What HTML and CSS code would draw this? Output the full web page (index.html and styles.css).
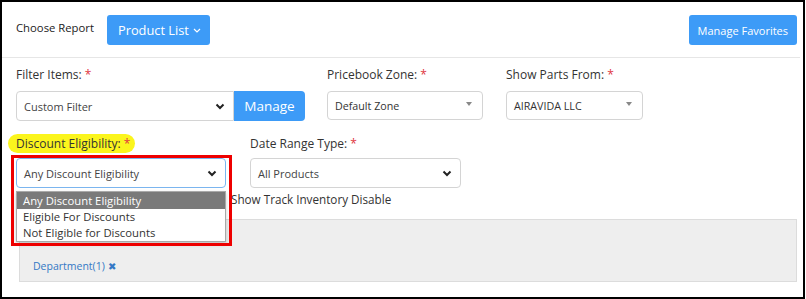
FILE: index.html
```html
<!DOCTYPE html>
<html lang="en">
<head>
    <meta charset="UTF-8">
    <meta name="viewport" content="width=device-width, initial-scale=1.0">
    <title>Product List Report</title>
    <link rel="stylesheet" href="styles.css">
</head>
<body>
    <div class="frame">
        <!-- Report chooser -->
        <div class="top-bar">
            <span class="choose-label">Choose Report</span>
            <button class="btn btn-report">Product List
                <svg class="caret" width="8" height="5" viewBox="0 0 8 5"><path d="M1 1l3 3 3-3" fill="none" stroke="#fff" stroke-width="1.2"/></svg>
            </button>
            <button class="btn btn-fav">Manage Favorites</button>
        </div>

        <!-- Filters -->
        <div class="filters">
            <div class="row">
                <div class="field col-filter">
                    <label class="field-label">Filter Items: <span class="req">*</span></label>
                    <div class="input-group">
                        <div class="select">
                            <span>Custom Filter</span>
                            <svg class="chev" width="10" height="7" viewBox="0 0 10 7"><path d="M1.5 1.5l3.5 3.5 3.5-3.5" fill="none" stroke="#222" stroke-width="2"/></svg>
                        </div>
                        <button class="btn btn-manage">Manage</button>
                    </div>
                </div>
                <div class="field col-zone">
                    <label class="field-label">Pricebook Zone: <span class="req">*</span></label>
                    <div class="select select-sm">
                        <span>Default Zone</span>
                        <span class="tri"></span>
                    </div>
                </div>
                <div class="field col-parts">
                    <label class="field-label">Show Parts From: <span class="req">*</span></label>
                    <div class="select select-sm">
                        <span>AIRAVIDA LLC</span>
                        <span class="tri"></span>
                    </div>
                </div>
            </div>

            <div class="row row-2">
                <div class="field col-discount">
                    <label class="field-label marked">Discount Eligibility: <span class="req">*</span></label>
                    <div class="select focused">
                        <span>Any Discount Eligibility</span>
                        <svg class="chev" width="10" height="7" viewBox="0 0 10 7"><path d="M1.5 1.5l3.5 3.5 3.5-3.5" fill="none" stroke="#222" stroke-width="2"/></svg>
                    </div>
                    <ul class="dropdown">
                        <li class="active">Any Discount Eligibility</li>
                        <li>Eligible For Discounts</li>
                        <li>Not Eligible for Discounts</li>
                    </ul>
                    <div class="annotation"></div>
                </div>
                <div class="field col-date">
                    <label class="field-label">Date Range Type: <span class="req">*</span></label>
                    <div class="select">
                        <span>All Products</span>
                        <svg class="chev" width="10" height="7" viewBox="0 0 10 7"><path d="M1.5 1.5l3.5 3.5 3.5-3.5" fill="none" stroke="#222" stroke-width="2"/></svg>
                    </div>
                </div>
            </div>

            <div class="check-row">
                <span class="check"><span class="box"></span></span>
                <label class="check"><span class="box"></span>Show Track Inventory Disable</label>
            </div>

            <div class="tags-panel">
                <a class="tag" href="#">Department(1) <span class="x">&#10006;</span></a>
            </div>
        </div>
    </div>
</body>
</html>
```

FILE: styles.css
```css
/* General */
body {
    margin: 0;
    font-family: "Open Sans", Arial, sans-serif;
    color: #333;
    background: #fff;
}

.frame {
    width: 805px;
    height: 299px;
    box-sizing: border-box;
    border: 2px solid #000;
    overflow: hidden;
}

/* Top bar */
.top-bar {
    display: flex;
    align-items: center;
    padding: 13px 3px 12px 14px;
    margin: 0 3px 0 0;
    border-bottom: 1px solid #e6e6e6;
}
.choose-label {
    font-size: 11.3px;
    color: #222;
    margin-right: 13px;
    margin-top: -6px;
}

.btn {
    font-family: inherit;
    background-color: #3d9bf7;
    color: #fff;
    border: none;
    border-radius: 3px;
    cursor: pointer;
}
.btn-report {
    height: 30px;
    padding: 0 9px 0 11px;
    font-size: 12.8px;
    display: flex;
    align-items: center;
    gap: 4px;
}
.btn-fav {
    height: 30px;
    margin-left: auto;
    padding: 0 9px;
    font-size: 11px;
}

/* Filters */
.filters {
    padding: 8px 0 0 14px;
    position: relative;
}
.row {
    display: flex;
}
.row-2 {
    margin-top: 12px;
}
.field {
    display: flex;
    flex-direction: column;
    position: relative;
}
.field-label {
    font-size: 12px;
    line-height: 18px;
    height: 18px;
    margin-bottom: 7px;
}
.row-2 .field-label {
    margin-top: 2px;
    margin-bottom: 5px;
}
.req {
    color: #e0353f;
}
.field-label.marked {
    align-self: flex-start;
    background: #fbf51d;
    border-radius: 10px;
    padding: 0 5px 0 8px;
    margin-left: -8px;
    margin-top: 1px;
    height: 19px;
    line-height: 20px;
}

.col-filter { width: 289px; margin-right: 22px; }
.col-zone { width: 156px; margin-right: 23px; }
.col-parts { width: 137px; }
.col-discount { width: 210px; margin-right: 24px; }
.col-date { width: 211px; }

.select {
    height: 30px;
    box-sizing: border-box;
    border: 1px solid #d4d4d4;
    border-radius: 4px;
    display: flex;
    align-items: center;
    justify-content: space-between;
    padding: 0 8px 0 7px;
    font-size: 11px;
    color: #444;
    background: #fff;
}
.select-sm {
    height: 29px;
    font-size: 10.7px;
    color: #333;
}
.select.focused {
    border-color: #7bb5ef;
}
.tri {
    width: 0;
    height: 0;
    border-left: 3.5px solid transparent;
    border-right: 3.5px solid transparent;
    border-top: 4px solid #888;
    margin-right: 2px;
    margin-top: -3px;
}

.input-group {
    display: flex;
}
.input-group .select {
    flex: 1;
    border-radius: 4px 0 0 4px;
    height: 30px;
}
.btn-manage {
    width: 71px;
    height: 30px;
    font-size: 13.5px;
    border-radius: 0 4px 4px 0;
}

/* Open dropdown */
.dropdown {
    position: absolute;
    top: 58px;
    left: 0;
    width: 210px;
    margin: 0;
    padding: 0;
    list-style: none;
    box-sizing: border-box;
    border: 1px solid #a9a9a9;
    background: #fff;
    box-shadow: 0 2px 4px rgba(0, 0, 0, 0.2);
    font-size: 11.3px;
    z-index: 5;
}
.dropdown li {
    height: 16px;
    line-height: 16px;
    padding-left: 6px;
    color: #333;
}
.dropdown li.active {
    height: 17px;
    line-height: 17px;
    background: #7a7a7a;
    color: #fff;
}

/* red annotation box */
.annotation {
    position: absolute;
    top: 22px;
    left: -5px;
    width: 221px;
    height: 91px;
    box-sizing: border-box;
    border: 3px solid #ee0000;
    z-index: 6;
}

/* Checkbox row */
.check-row {
    display: flex;
    margin-top: 2px;
    height: 17px;
    align-items: center;
}
.check {
    display: flex;
    align-items: center;
    font-size: 11.7px;
    color: #333;
}
.check:first-child {
    width: 196px;
    margin-left: 1px;
}
.box {
    width: 11px;
    height: 11px;
    border: 1px solid #999;
    border-radius: 3px;
    margin-right: 5px;
}

/* Tags panel */
.tags-panel {
    margin: 12px 6px 0 3px;
    height: 63px;
    box-sizing: border-box;
    background: #eeeeee;
    border: 1px solid #dcdcdc;
    padding: 33px 13px 0;
}
.tag {
    font-size: 10.5px;
    color: #3478c5;
    text-decoration: none;
}
.tag .x {
    font-size: 10px;
    color: #3478c5;
}
```
